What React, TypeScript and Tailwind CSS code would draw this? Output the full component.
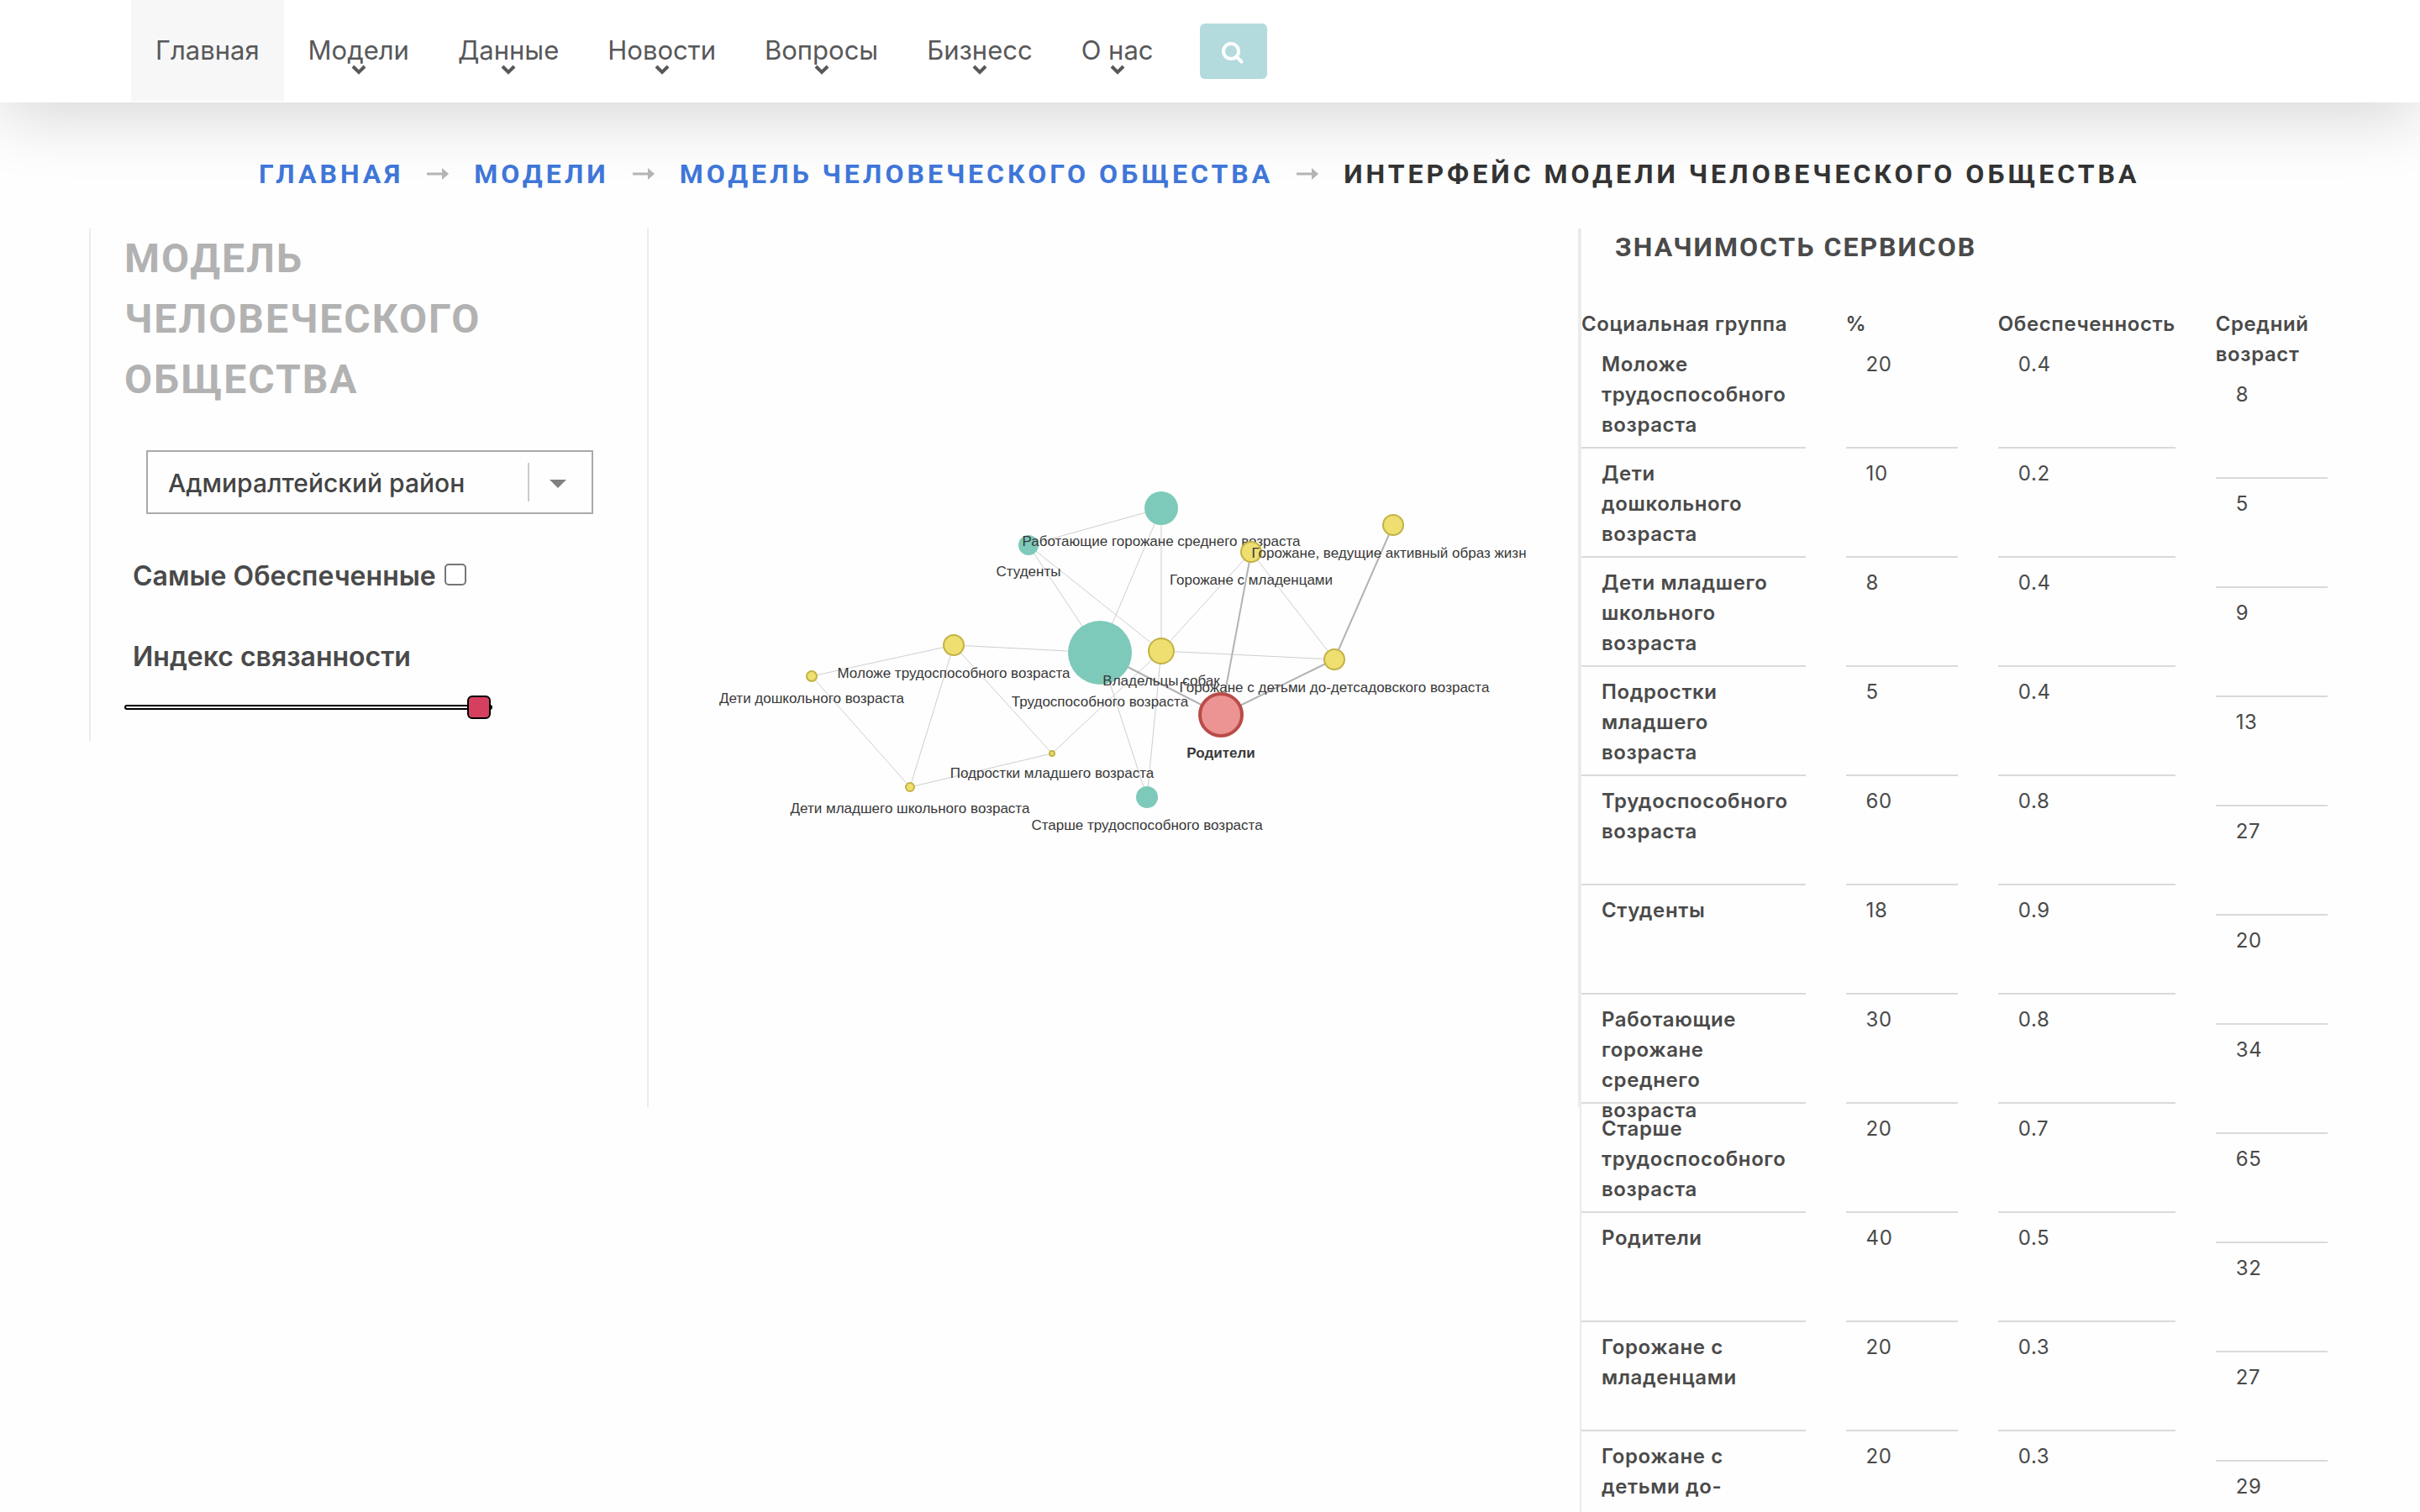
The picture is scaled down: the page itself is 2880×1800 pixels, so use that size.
import { useState } from "react";

const menu = ["Модели", "Данные", "Новости", "Вопросы", "Бизнесс", "О нас"];

const crumbs = ["Главная", "Модели", "Модель человеческого общества"];

type Group = { name: string; share: number; supply: string; age: number };

const groups: Group[] = [
  { name: "Моложе трудоспособного возраста", share: 20, supply: "0.4", age: 8 },
  { name: "Дети дошкольного возраста", share: 10, supply: "0.2", age: 5 },
  { name: "Дети младшего школьного возраста", share: 8, supply: "0.4", age: 9 },
  { name: "Подростки младшего возраста", share: 5, supply: "0.4", age: 13 },
  { name: "Трудоспособного возраста", share: 60, supply: "0.8", age: 27 },
  { name: "Студенты", share: 18, supply: "0.9", age: 20 },
  { name: "Работающие горожане среднего возраста", share: 30, supply: "0.8", age: 34 },
  { name: "Старше трудоспособного возраста", share: 20, supply: "0.7", age: 65 },
  { name: "Родители", share: 40, supply: "0.5", age: 32 },
  { name: "Горожане с младенцами", share: 20, supply: "0.3", age: 27 },
  { name: "Горожане с детьми до-детсадовского возраста", share: 20, supply: "0.3", age: 29 },
];

type Kind = "teal" | "yellow" | "red";
type Node = { id: string; label: string; x: number; y: number; r: number; labelY: number; kind: Kind; labelX?: number };

const nodes: Node[] = [
  { id: "young", label: "Моложе трудоспособного возраста", x: 362, y: 496, r: 12, labelY: 535, kind: "yellow" },
  { id: "preschool", label: "Дети дошкольного возраста", x: 193, y: 533, r: 6, labelY: 565, kind: "yellow" },
  { id: "junior", label: "Дети младшего школьного возраста", x: 310, y: 665, r: 5, labelY: 696, kind: "yellow" },
  { id: "teen", label: "Подростки младшего возраста", x: 479, y: 625, r: 3, labelY: 654, kind: "yellow" },
  { id: "able", label: "Трудоспособного возраста", x: 536, y: 505, r: 38, labelY: 569, kind: "teal" },
  { id: "student", label: "Студенты", x: 451, y: 377, r: 12, labelY: 414, kind: "teal" },
  { id: "worker", label: "Работающие горожане среднего возраста", x: 609, y: 333, r: 20, labelY: 378, kind: "teal" },
  { id: "senior", label: "Старше трудоспособного возраста", x: 592, y: 677, r: 13, labelY: 716, kind: "teal" },
  { id: "parent", label: "Родители", x: 680, y: 579, r: 25, labelY: 630, kind: "red" },
  { id: "baby", label: "Горожане с младенцами", x: 716, y: 385, r: 12, labelY: 424, kind: "yellow" },
  { id: "dog", label: "Владельцы собак", x: 609, y: 503, r: 15, labelY: 544, kind: "yellow" },
  { id: "toddler", label: "Горожане с детьми до-детсадовского возраста", x: 815, y: 513, r: 12, labelY: 552, kind: "yellow" },
  { id: "active", label: "Горожане, ведущие активный образ жизн", x: 885, y: 353, r: 12, labelY: 392, kind: "yellow", labelX: 880 },
];

const byId = Object.fromEntries(nodes.map((n) => [n.id, n]));

const links: [string, string, number][] = [
  ["worker", "student", 1],
  ["worker", "able", 1],
  ["worker", "dog", 1],
  ["student", "able", 1],
  ["student", "dog", 1],
  ["baby", "dog", 1],
  ["baby", "toddler", 1],
  ["dog", "toddler", 1],
  ["dog", "teen", 1],
  ["dog", "senior", 1],
  ["able", "senior", 1],
  ["able", "young", 1],
  ["young", "preschool", 1],
  ["young", "junior", 1],
  ["young", "teen", 1],
  ["preschool", "junior", 1],
  ["junior", "teen", 1],
  ["parent", "able", 2],
  ["parent", "baby", 2],
  ["parent", "toddler", 2],
  ["active", "toddler", 2],
];

const fills: Record<Kind, string> = { teal: "#7ecaba", yellow: "#efdf71", red: "#ec9393" };
const strokes: Record<Kind, string> = { teal: "none", yellow: "#c2b245", red: "#b94c48" };

function Header() {
  return (
    <header className="relative z-10 h-[122px] bg-white shadow-[0_16px_80px_rgba(0,0,0,0.16)]">
      <nav className="flex items-start pl-39 text-[31px] leading-[120px] text-[#58585a]">
        <a href="#home" className="bg-[#f7f7f7] px-[29px]">
          Главная
        </a>
        {menu.map((item) => (
          <a key={item} href="#menu" className="relative px-[29px]">
            {item}
            <svg viewBox="0 0 18 12" className="absolute top-[77px] left-1/2 h-3 w-[18px] -translate-x-1/2">
              <path d="M2 2 9 9 16 2" fill="none" stroke="#58585a" strokeWidth="4" />
            </svg>
          </a>
        ))}
        <button
          type="button"
          aria-label="Поиск"
          className="mt-7 ml-[26px] flex h-[66px] w-20 items-center justify-center rounded-md bg-[#b3dadc]"
        >
          <svg viewBox="0 0 28 28" className="mt-1 h-7 w-7">
            <circle cx="11" cy="12" r="9" fill="none" stroke="#fff" strokeWidth="4" />
            <path d="M17.500 18.500 23.500 24.500" stroke="#fff" strokeWidth="4" strokeLinecap="round" />
          </svg>
        </button>
      </nav>
    </header>
  );
}

function Breadcrumbs() {
  return (
    <nav className="relative z-20 mt-[61px] mb-[41px] pl-77 font-['Roboto',sans-serif] text-[32px] leading-12 font-bold tracking-[4px] uppercase">
      <ol className="flex items-center">
        {crumbs.map((c) => (
          <li key={c} className="flex items-center">
            <a href="#crumb" className="text-[#3f76d8]">
              {c}
            </a>
            <svg viewBox="0 0 26 16" className="mr-[30px] ml-7 h-4 w-[26px]">
              <path d="M0 8H19" stroke="#b4b4b4" strokeWidth="3" />
              <path d="M18 1 26 8 18 15Z" fill="#b4b4b4" />
            </svg>
          </li>
        ))}
        <li aria-current="page" className="text-[#333]">
          Интерфейс модели человеческого общества
        </li>
      </ol>
    </nav>
  );
}

function Controls() {
  const [connectivity, setConnectivity] = useState(100);
  const [richest, setRichest] = useState(false);
  return (
    <section className="border-l-2 border-[#ebebeb] pr-[38px] pb-[26px] pl-10">
      <h1 className="font-['Roboto',sans-serif] text-[48px] leading-[72px] font-bold tracking-[2px] text-[#b2b2b2] uppercase">
        Модель человеческого общества
      </h1>
      <div className="relative mx-[26px] mt-12">
        <select
          aria-label="Район"
          className="h-[76px] w-full appearance-none border-2 border-[#aaa] bg-transparent pt-0.5 pr-20 pl-6 text-[30px] font-medium text-[#444]"
        >
          <option>Адмиралтейский район</option>
        </select>
        <span className="pointer-events-none absolute inset-y-0 right-0 flex w-[78px] items-center">
          <span className="h-[46px] w-0.5 bg-[#ccc]" />
          <svg viewBox="0 0 20 10" className="mt-1 ml-6 h-2.5 w-5">
            <path d="M0 0H20L10 10Z" fill="#808080" />
          </svg>
        </span>
      </div>
      <label className="mt-[50px] ml-2.5 flex items-center gap-2.5 text-[32px] leading-12 font-semibold">
        Самые Обеспеченные
        <input
          type="checkbox"
          checked={richest}
          onChange={(e) => setRichest(e.target.checked)}
          className="mb-1 size-[26px] appearance-none rounded-[5px] border-2 border-[#767676] bg-white checked:bg-[#767676]"
        />
      </label>
      <label htmlFor="connectivity" className="mt-12 ml-2.5 block text-[32px] leading-12 font-semibold">
        Индекс связанности
      </label>
      <input
        id="connectivity"
        type="range"
        value={connectivity}
        onChange={(e) => setConnectivity(Number(e.target.value))}
        className="mt-[22px] block h-7 w-3/4 appearance-none bg-transparent [&::-webkit-slider-runnable-track]:h-1.5 [&::-webkit-slider-runnable-track]:rounded-[3px] [&::-webkit-slider-runnable-track]:border-2 [&::-webkit-slider-runnable-track]:border-black [&::-webkit-slider-runnable-track]:bg-[#eee] [&::-webkit-slider-thumb]:mt-[-13px] [&::-webkit-slider-thumb]:size-7 [&::-webkit-slider-thumb]:appearance-none [&::-webkit-slider-thumb]:rounded-md [&::-webkit-slider-thumb]:border-2 [&::-webkit-slider-thumb]:border-black [&::-webkit-slider-thumb]:bg-[#d54060]"
      />
    </section>
  );
}

function Graph() {
  return (
    <section className="border-x-2 border-[#ebebeb] pr-[60px]">
      <svg viewBox="-1 0 1046 1046" className="aspect-square w-full font-['Liberation_Sans',Arial,sans-serif] text-[17px]">
        {links.map(([a, b, w]) => (
          <line
            key={a + b}
            x1={byId[a].x}
            y1={byId[a].y}
            x2={byId[b].x}
            y2={byId[b].y}
            stroke={w > 1 ? "#b3b3b3" : "#cecece"}
            strokeWidth={w}
          />
        ))}
        {nodes.map((n) => (
          <g key={n.id}>
            <circle
              cx={n.x}
              cy={n.y}
              r={n.r}
              fill={fills[n.kind]}
              stroke={strokes[n.kind]}
              strokeWidth={n.kind === "red" ? 4 : 2}
            />
            <text
              x={n.labelX ?? n.x}
              y={n.labelY}
              textAnchor="middle"
              fill="#383838"
              className={n.kind === "red" ? "font-bold" : "font-normal"}
            >
              {n.label}
            </text>
          </g>
        ))}
      </svg>
    </section>
  );
}

const cell = "h-[130px] border-b-2 border-[#dadada] px-6 pt-3";

function Services() {
  return (
    <section className="border-l-2 border-[#ebebeb]">
      <h2 className="pl-10 font-['Roboto',sans-serif] text-[32px] leading-11 font-bold tracking-[2px] uppercase">
        Значимость сервисов
      </h2>
      <table className="mt-13 grid grid-cols-[minmax(0,2fr)_minmax(0,1fr)_max-content_minmax(0,1fr)] gap-x-12 text-[24px] leading-9 tracking-wide">
        <thead className="contents">
          <tr className="contents text-left">
            <th className="h-9 font-semibold">Социальная группа</th>
            <th className="h-9 font-semibold">%</th>
            <th className="h-9 font-semibold">Обеспеченность</th>
            <th className="h-9 font-semibold">Средний возраст</th>
          </tr>
        </thead>
        <tbody className="contents">
          {groups.map((g, i) => (
            <tr key={g.name} className="contents text-left">
              <th scope="row" className={`${cell} font-semibold`}>
                {g.name}
              </th>
              <td className={cell}>{g.share}</td>
              <td className={cell}>{g.supply}</td>
              <td className="h-[130px]">
                <div className={i === 0 ? "h-9" : "h-9 border-b-2 border-[#dadada]"} />
                <div className="px-6 pt-3">{g.age}</div>
              </td>
            </tr>
          ))}
        </tbody>
      </table>
    </section>
  );
}

export default function App() {
  return (
    <div className="h-screen overflow-hidden bg-[#fefefe] font-['Inter',sans-serif] text-[#4a4a4a]">
      <Header />
      <Breadcrumbs />
      <main className="mr-[110px] ml-[106px] grid grid-cols-[664fr_1110fr_890fr] items-start">
        <Controls />
        <Graph />
        <Services />
      </main>
    </div>
  );
}
